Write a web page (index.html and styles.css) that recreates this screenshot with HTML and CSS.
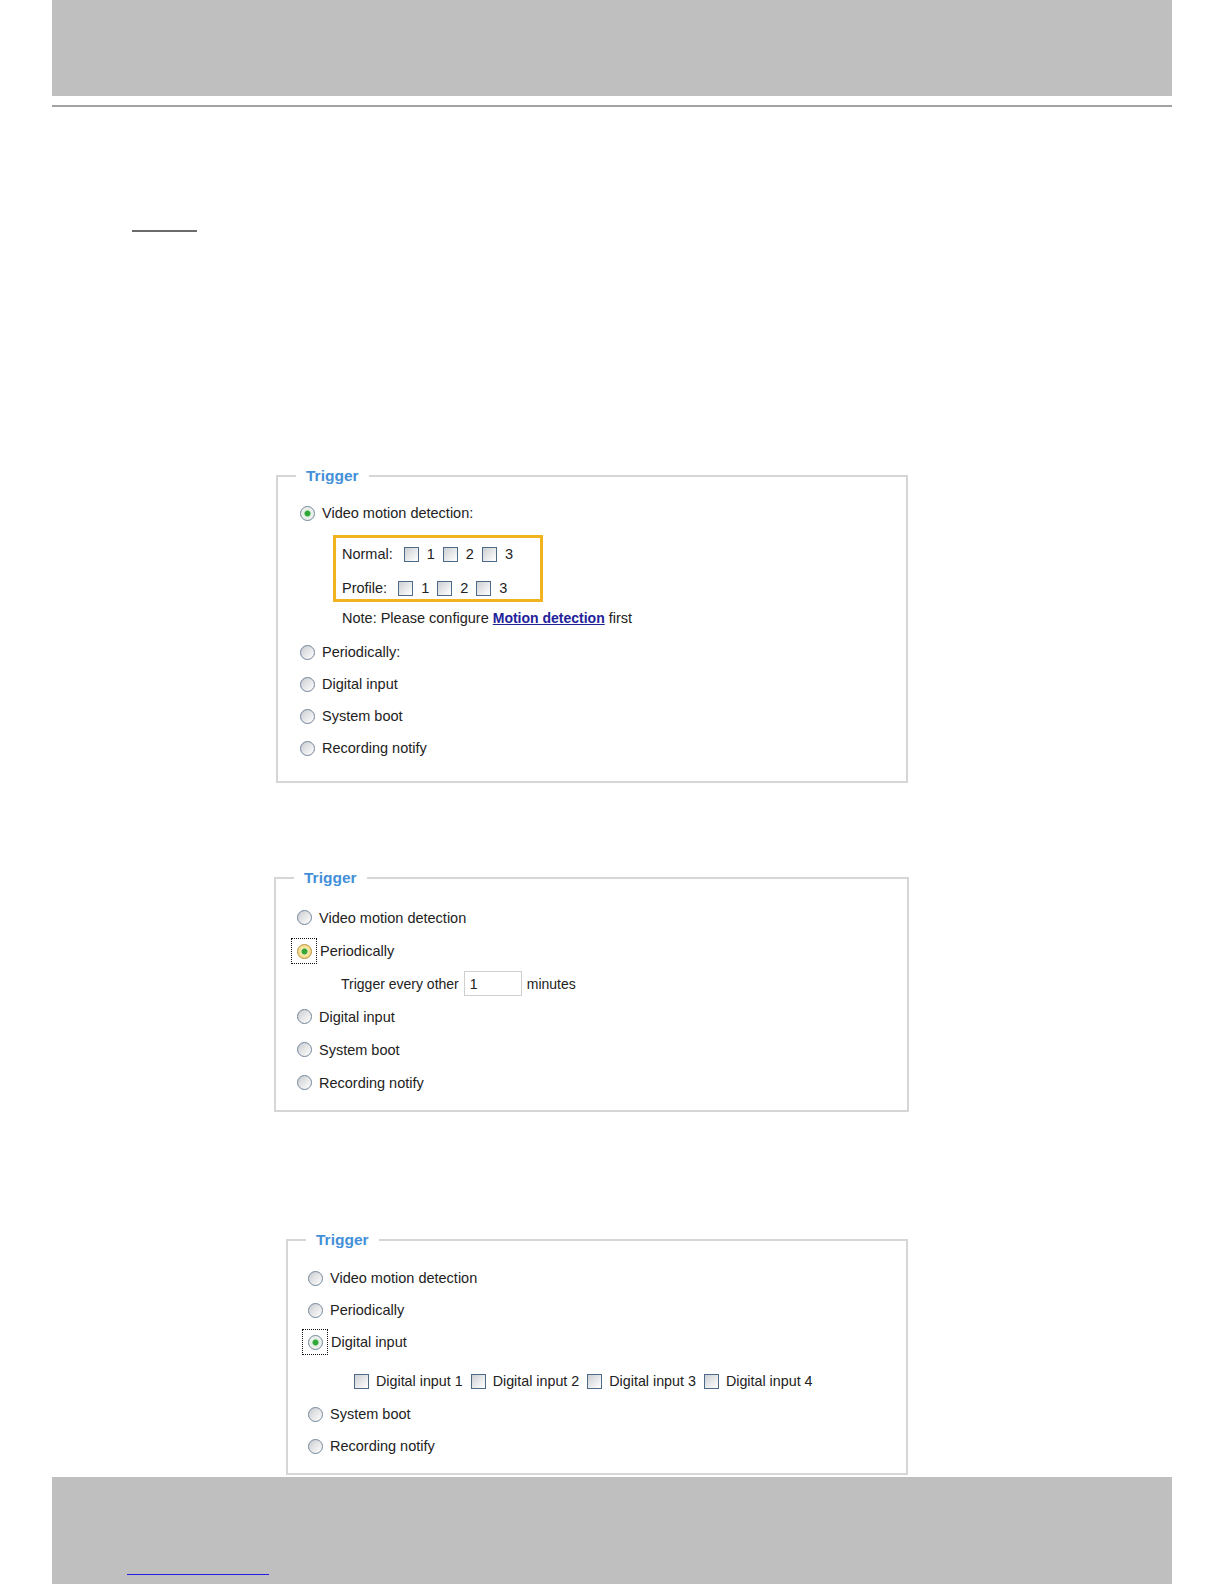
FILE: index.html
```html
<!DOCTYPE html>
<html>
<head>
    <meta charset="utf-8">
    <title>Event settings - Trigger</title>
    <link rel="stylesheet" href="styles.css">
</head>
<body>
    <div class="page">
        <div class="top-band"></div>
        <div class="top-rule"></div>
        <div class="mark"></div>

        <!-- Trigger: video motion detection -->
        <fieldset class="trigger trigger--motion">
            <legend>Trigger</legend>
            <div class="trigger-body">
                <label class="opt"><input type="radio" class="radio" name="trig1" checked>Video motion detection:</label>
                <div class="windows">
                    <div class="win-row">
                        <span class="win-name">Normal:</span>
                        <input type="checkbox" class="tick"><span class="win-num">1</span>
                        <input type="checkbox" class="tick"><span class="win-num">2</span>
                        <input type="checkbox" class="tick"><span class="win-num">3</span>
                    </div>
                    <div class="win-row">
                        <span class="win-name">Profile:</span>
                        <input type="checkbox" class="tick"><span class="win-num">1</span>
                        <input type="checkbox" class="tick"><span class="win-num">2</span>
                        <input type="checkbox" class="tick"><span class="win-num">3</span>
                    </div>
                </div>
                <p class="note">Note: Please configure <a href="#">Motion detection</a> first</p>
                <label class="opt"><input type="radio" class="radio" name="trig1">Periodically:</label>
                <label class="opt"><input type="radio" class="radio" name="trig1">Digital input</label>
                <label class="opt"><input type="radio" class="radio" name="trig1">System boot</label>
                <label class="opt"><input type="radio" class="radio" name="trig1">Recording notify</label>
            </div>
        </fieldset>

        <!-- Trigger: periodically -->
        <fieldset class="trigger trigger--period">
            <legend>Trigger</legend>
            <div class="trigger-body">
                <label class="opt"><input type="radio" class="radio" name="trig2">Video motion detection</label>
                <label class="opt"><span class="focus-box"><input type="radio" class="radio is-hot" name="trig2" checked></span>Periodically</label>
                <div class="opt every">Trigger every other <input type="text" class="num-field" value="1"> minutes</div>
                <label class="opt"><input type="radio" class="radio" name="trig2">Digital input</label>
                <label class="opt"><input type="radio" class="radio" name="trig2">System boot</label>
                <label class="opt"><input type="radio" class="radio" name="trig2">Recording notify</label>
            </div>
        </fieldset>

        <!-- Trigger: digital input -->
        <fieldset class="trigger trigger--input">
            <legend>Trigger</legend>
            <div class="trigger-body">
                <label class="opt"><input type="radio" class="radio" name="trig3">Video motion detection</label>
                <label class="opt"><input type="radio" class="radio" name="trig3">Periodically</label>
                <label class="opt"><span class="focus-box"><input type="radio" class="radio" name="trig3" checked></span>Digital input</label>
                <div class="di-row">
                    <label class="di"><input type="checkbox" class="tick">Digital input 1</label>
                    <label class="di"><input type="checkbox" class="tick">Digital input 2</label>
                    <label class="di"><input type="checkbox" class="tick">Digital input 3</label>
                    <label class="di"><input type="checkbox" class="tick">Digital input 4</label>
                </div>
                <label class="opt"><input type="radio" class="radio" name="trig3">System boot</label>
                <label class="opt"><input type="radio" class="radio" name="trig3">Recording notify</label>
            </div>
        </fieldset>

        <div class="foot-band"><span class="foot-link"></span></div>
    </div>
</body>
</html>
```

FILE: styles.css
```css
body {
    margin: 0;
    background: #fff;
    font-family: "Liberation Sans", Arial, sans-serif;
    font-size: 14.5px;
    color: #222;
}

.page {
    width: 1224px;
    height: 1584px;
    overflow: hidden;
}

/* 页眉 */
.top-band {
    margin-left: 52px;
    width: 1120px;
    height: 96px;
    background: #bfbfbf;
}

.top-rule {
    margin: 9px 0 0 52px;
    width: 1120px;
    height: 2px;
    background: #a2a2a2;
}

.mark {
    margin: 123px 0 0 132px;
    width: 65px;
    height: 2px;
    background: #6b6b6b;
}

/* 字段组 */
.trigger {
    box-sizing: border-box;
    margin: 0;
    padding: 0;
    border: 2px solid #d6d6d6;
    min-inline-size: 0;
}

.trigger legend {
    margin-left: 18px;
    padding: 0 10px;
    font-size: 15.5px;
    font-weight: bold;
    line-height: 20px;
    color: #438fd8;
}

.trigger--motion {
    margin: 234px 0 0 276px;
    width: 632px;
}

.trigger--motion .trigger-body {
    padding: 11px 0 17px 22px;
}

.trigger--period {
    margin: 85px 0 0 274px;
    width: 635px;
}

.trigger--period .trigger-body {
    padding: 13px 0 11px 21px;
}

.trigger--input {
    margin: 118px 0 0 286px;
    width: 622px;
}

.trigger--input .trigger-body {
    padding: 12px 0 11px 20px;
}

.opt {
    display: flex;
    align-items: center;
    height: 32px;
}

.trigger--period .opt {
    height: 33px;
}

/* 单选框 */
.radio {
    -webkit-appearance: none;
    appearance: none;
    box-sizing: border-box;
    width: 15px;
    height: 15px;
    margin: 0 7px 0 0;
    border: 1px solid #73859a;
    border-radius: 50%;
    background: linear-gradient(135deg, #c6cbd1 0%, #e9e9e9 55%, #fff 100%);
}

.radio:checked {
    background: radial-gradient(circle, #2fa83a 0 2.5px, #e6efe6 3.5px, #f2f2f2 100%);
}

.radio.is-hot {
    border-color: #b8933a;
    background: radial-gradient(circle, #33a63a 0 2.5px, #f7eab0 3.5px, #f0c85c 100%);
}

.focus-box {
    display: inline-flex;
    margin: 0 3px 0 -6px;
    padding: 5px 4px 4px 5px;
    border: 1px dotted #111;
}

.focus-box .radio {
    margin: 0;
}

/* 复选框 */
.tick {
    -webkit-appearance: none;
    appearance: none;
    box-sizing: border-box;
    width: 15px;
    height: 15px;
    margin: 0;
    border: 1px solid #4d6a88;
    border-radius: 0;
    background: linear-gradient(135deg, #cbcfd4 0%, #efefef 65%, #fff 100%);
}

.windows {
    box-sizing: border-box;
    width: 210px;
    height: 67px;
    margin: 6px 0 0 33px;
    padding: 5px 0 0 6px;
    border: 3px solid #f1b320;
}

.win-row {
    display: flex;
    align-items: center;
    height: 22px;
}

.win-row + .win-row {
    margin-top: 12px;
}

.win-name {
    margin-right: 11px;
}

.win-num {
    margin: 0 8px;
}

.note {
    display: flex;
    align-items: center;
    height: 20px;
    margin: 6px 0 0 42px;
    white-space: pre;
}

.note a {
    color: #22229a;
    font-size: 14px;
    font-weight: bold;
    text-decoration: underline;
}

.note + .opt {
    margin-top: 8px;
}

.every {
    margin-left: 44px;
    font-size: 14px;
}

.num-field {
    box-sizing: border-box;
    width: 58px;
    height: 25px;
    margin: 0 5px 0 5px;
    padding: 0 0 0 5px;
    border: 1px solid #cfcfcf;
    font-family: inherit;
    font-size: 14px;
    color: #222;
}

.di-row {
    display: flex;
    align-items: center;
    height: 34px;
    padding-top: 6px;
    margin-left: 46px;
}

.di {
    display: flex;
    align-items: center;
    margin-right: 8px;
    font-size: 14.3px;
}

.di .tick {
    margin-right: 7px;
}

/* 页脚 */
.foot-band {
    box-sizing: border-box;
    margin: 2px 0 0 52px;
    width: 1120px;
    height: 107px;
    padding: 97px 0 0 75px;
    background: #bfbfbf;
}

.foot-link {
    display: block;
    width: 142px;
    height: 1px;
    background: #1f1fe6;
}
```
